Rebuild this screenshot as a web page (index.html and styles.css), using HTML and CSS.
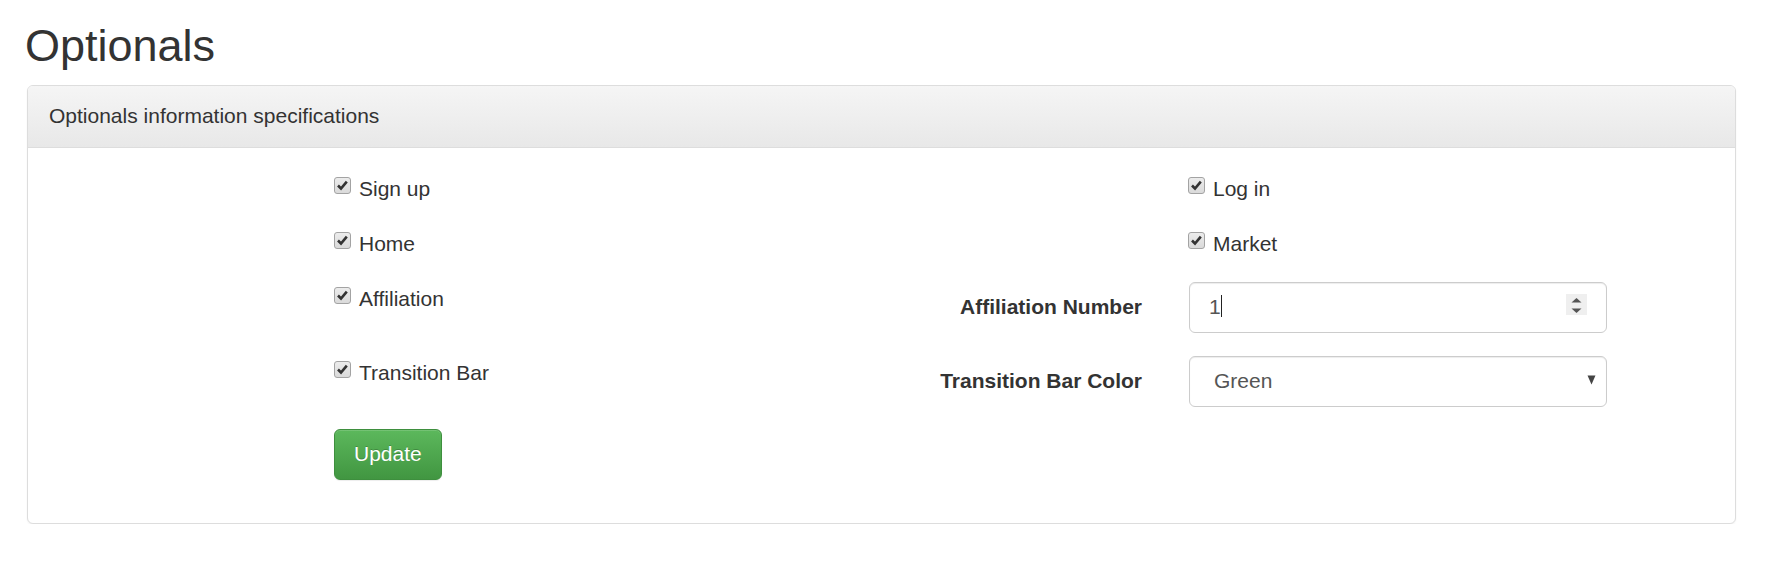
FILE: index.html
```html
<!DOCTYPE html>
<html lang="en">
<head>
	<meta charset="UTF-8">
	<title>Optionals</title>
	<link rel="stylesheet" href="styles.css">
</head>
<body>
	<div class="page">
		<h2 class="page-title">Optionals</h2>
		<div class="panel">
			<div class="panel-heading">Optionals information specifications</div>
			<form class="panel-body form-grid">
				<label class="check"><span class="box"><svg width="15" height="15" viewBox="0 0 15 15"><path d="M3 7.5 L6 10.5 L11.8 3.6" fill="none" stroke="#333" stroke-width="2.6"/></svg></span>Sign up</label>
				<div></div>
				<label class="check check-right"><span class="box"><svg width="15" height="15" viewBox="0 0 15 15"><path d="M3 7.5 L6 10.5 L11.8 3.6" fill="none" stroke="#333" stroke-width="2.6"/></svg></span>Log in</label>

				<label class="check"><span class="box"><svg width="15" height="15" viewBox="0 0 15 15"><path d="M3 7.5 L6 10.5 L11.8 3.6" fill="none" stroke="#333" stroke-width="2.6"/></svg></span>Home</label>
				<div></div>
				<label class="check check-right"><span class="box"><svg width="15" height="15" viewBox="0 0 15 15"><path d="M3 7.5 L6 10.5 L11.8 3.6" fill="none" stroke="#333" stroke-width="2.6"/></svg></span>Market</label>

				<label class="check"><span class="box"><svg width="15" height="15" viewBox="0 0 15 15"><path d="M3 7.5 L6 10.5 L11.8 3.6" fill="none" stroke="#333" stroke-width="2.6"/></svg></span>Affiliation</label>
				<div class="field-label">Affiliation Number</div>
				<div class="form-control num-input">
					<span>1<span class="caret"></span></span>
					<svg class="spinner" width="21" height="21" viewBox="0 0 21 21"><rect width="21" height="21" fill="#efefef"/><polygon points="5.5,8.5 10.5,4 15.5,8.5" fill="#555"/><polygon points="5.5,14.5 15.5,14.5 10.5,19" fill="#555"/></svg>
				</div>

				<label class="check"><span class="box"><svg width="15" height="15" viewBox="0 0 15 15"><path d="M3 7.5 L6 10.5 L11.8 3.6" fill="none" stroke="#333" stroke-width="2.6"/></svg></span>Transition Bar</label>
				<div class="field-label">Transition Bar Color</div>
				<div class="form-control select-box">
					<span>Green</span>
					<svg class="select-arrow" width="9" height="10" viewBox="0 0 9 10"><polygon points="0.5,0.5 8.5,0.5 4.5,9.5" fill="#444"/></svg>
				</div>

				<div class="actions">
					<button type="button" class="btn-success">Update</button>
				</div>
			</form>
		</div>
	</div>
</body>
</html>
```

FILE: styles.css
```css
*{
	box-sizing: border-box;
}
body{
	margin: 0;
	font-family: "Liberation Sans", Arial, sans-serif;
	font-size: 21px;
	line-height: 30px;
	color: #333;
	background-color: #fff;
}
.page{
	padding: 0 29px 0 27px;
}
.page-title{
	margin: 21px 0 14px -2px;
	font-size: 45px;
	font-weight: normal;
	line-height: 49.5px;
}
.panel{
	border: 1px solid #ddd;
	border-radius: 6px;
	background-color: #fff;
	box-shadow: 0 1px 2px rgba(0,0,0,.05);
}
.panel-heading{
	padding: 15px 21px 16px;
	background: linear-gradient(to bottom, #f5f5f5 0, #e8e8e8 100%);
	border-bottom: 1px solid #ddd;
	border-radius: 5px 5px 0 0;
}
.form-grid{
	display: grid;
	grid-template-columns: 1fr 290px 418px;
	row-gap: 23px;
	padding: 24px 128px 43px 306px;
}
.check{
	display: flex;
	align-items: flex-start;
	padding-top: 2px;
	white-space: nowrap;
}
.check-right{
	margin-left: -1px;
}
.box{
	display: flex;
	align-items: center;
	justify-content: center;
	width: 17px;
	height: 17px;
	margin: 3px 8px 0 0;
	border: 1px solid #a3a3a3;
	border-radius: 3px;
	background: linear-gradient(to bottom, #ececec, #dadada);
}
.field-label{
	padding: 10px 47px 0 0;
	text-align: right;
	font-weight: bold;
	white-space: nowrap;
}
.form-control{
	display: flex;
	align-items: center;
	justify-content: space-between;
	height: 51px;
	border: 1px solid #ccc;
	border-radius: 6px;
	color: #555;
	box-shadow: inset 0 1px 1px rgba(0,0,0,.075);
}
.num-input{
	padding: 0 19px 0 19px;
}
.caret{
	display: inline-block;
	width: 1px;
	height: 22px;
	background-color: #222;
	vertical-align: -3px;
}
.spinner{
	margin-bottom: 6px;
}
.select-box{
	padding: 0 10px 0 24px;
}
.select-arrow{
	margin-bottom: 2px;
}
.actions{
	grid-column: 1 / 2;
	margin-top: -1px;
}
.btn-success{
	height: 51px;
	padding: 0 19px;
	font-family: inherit;
	font-size: 21px;
	color: #fff;
	text-shadow: 0 -1px 0 rgba(0,0,0,.2);
	background: linear-gradient(to bottom, #5cb85c 0, #419641 100%);
	border: 1px solid #3e8f3e;
	border-radius: 6px;
	box-shadow: inset 0 1px 0 rgba(255,255,255,.15), 0 1px 1px rgba(0,0,0,.075);
}
```
